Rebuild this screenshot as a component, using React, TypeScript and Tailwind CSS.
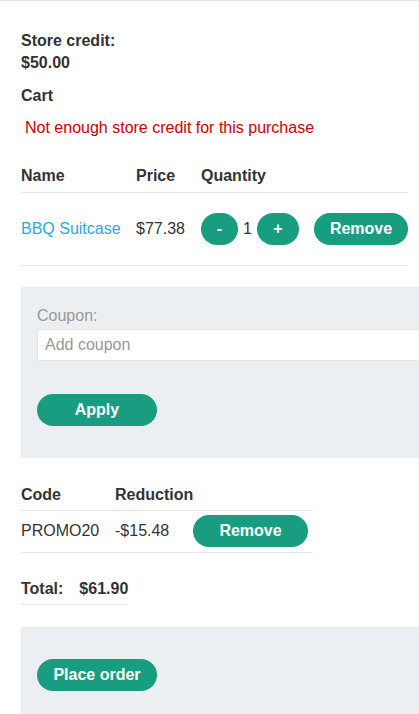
import React from 'react';

const btn =
  'h-8 rounded-full bg-[#189d80] text-white font-bold text-base leading-none flex items-center justify-center';

const App: React.FC = () => {
  return (
    <div className="min-h-screen w-full overflow-hidden bg-white text-[#333332] text-base leading-[22px] font-['Liberation_Sans',Arial,sans-serif]">
      <div className="h-px bg-[#d5efe0]" />

      <div className="pl-[21px]">
        {/* Credit + cart heading */}
        <div className="pt-[29px] font-bold">
          <div>Store credit:</div>
          <div>$50.00</div>
        </div>
        <h2 className="mt-[11px] font-bold">Cart</h2>
        <p className="mt-[10px] pl-1 text-[#cc0000]">Not enough store credit for this purchase</p>

        {/* Cart table */}
        <div className="mt-[26px] w-[387px]">
          <div className="grid grid-cols-[115px_65px_113px_94px] font-bold pb-[5px] border-b border-[#e6e6e6]">
            <span>Name</span>
            <span>Price</span>
            <span>Quantity</span>
            <span />
          </div>
          <div className="grid grid-cols-[115px_65px_113px_94px] items-center py-5 border-b border-[#e6e6e6]">
            <a href="#" className="text-[#29a9e2]">BBQ Suitcase</a>
            <span>$77.38</span>
            <div className="flex items-center gap-[5px]">
              <button className={`${btn} w-[37px]`}>-</button>
              <span>1</span>
              <button className={`${btn} w-[42px]`}>+</button>
            </div>
            <button className={`${btn} w-[94px]`}>Remove</button>
          </div>
        </div>

        {/* Coupon panel */}
        <div className="mt-[21px] bg-[#ebeff2] pl-4 pt-[18px] pb-[32px] overflow-hidden">
          <label className="block text-[#999999]">Coupon:</label>
          <input
            placeholder="Add coupon"
            className="mt-[2px] block h-8 w-[420px] bg-white border border-[#e6e6e6] px-[7px] text-base placeholder:text-[#999999] outline-none"
          />
          <button className={`${btn} mt-[33px] w-[120px]`}>Apply</button>
        </div>

        {/* Coupon table */}
        <div className="mt-[26px] w-[292px]">
          <div className="grid grid-cols-[94px_78px_120px] font-bold pb-1 border-b border-[#e6e6e6]">
            <span>Code</span>
            <span>Reduction</span>
            <span />
          </div>
          <div className="grid grid-cols-[94px_78px_120px] items-center pt-1 pb-[5px] border-b border-[#e6e6e6]">
            <span>PROMO20</span>
            <span>-$15.48</span>
            <button className={`${btn} w-[115px]`}>Remove</button>
          </div>
        </div>

        {/* Total */}
        <div className="mt-[25px] w-[107px] flex gap-4 font-bold pb-1 border-b border-[#e6e6e6]">
          <span>Total:</span>
          <span>$61.90</span>
        </div>

        {/* Order panel */}
        <div className="mt-[22px] bg-[#ebeff2] pl-4 pt-8 pb-8">
          <button className={`${btn} w-[120px]`}>Place order</button>
        </div>
      </div>
    </div>
  );
};

export default App;
